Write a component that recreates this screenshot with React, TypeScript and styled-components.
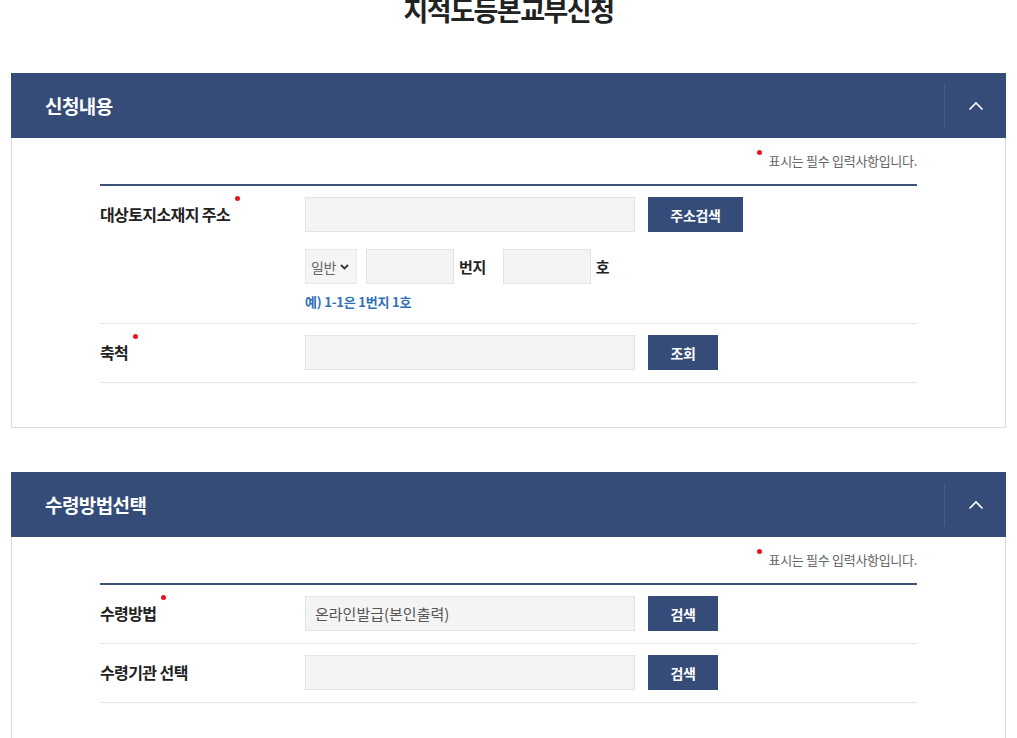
import React from "react";
import styled, { createGlobalStyle } from "styled-components";

const GlobalStyle = createGlobalStyle`
  html, body { margin: 0; padding: 0; background: #fff; }
  body { font-family: "Noto Sans CJK KR", "Noto Sans", sans-serif; color: #222; }
  * { box-sizing: border-box; }
`;

const Page = styled.div`
  padding: 0 11px;
  overflow: hidden;
`;

const Title = styled.h2`
  margin: -5px 0 48px;
  text-align: center;
  font-size: 27px;
  line-height: 30px;
  font-weight: 700;
  letter-spacing: -1.5px;
  color: #222;
`;

const Panel = styled.section`
  border: 1px solid #dcdcdc;
  border-top: 0;
  margin-bottom: 44px;
`;

const PanelHeader = styled.header`
  display: flex;
  align-items: center;
  height: 65px;
  margin: 0 -1px;
  background: #344c77;
`;

const PanelTitle = styled.h3`
  flex: 1;
  margin: 0;
  padding-left: 34px;
  font-size: 19px;
  font-weight: 700;
  letter-spacing: -0.6px;
  color: #fff;
`;

const Toggle = styled.button`
  display: flex;
  align-items: center;
  justify-content: center;
  width: 62px;
  height: 43px;
  padding: 0;
  border: 0;
  border-left: 1px solid #465d85;
  background: transparent;
  cursor: pointer;
`;

const PanelBody = styled.div`
  padding: 14px 88px 44px;
`;

const Note = styled.p`
  display: flex;
  justify-content: flex-end;
  margin: 0 0 14px;
  font-size: 13px;
  line-height: 18px;
  letter-spacing: -0.3px;
  color: #666;
`;

const NoteDot = styled.span`
  width: 5px;
  height: 5px;
  margin: -2px 7px 0 0;
  border-radius: 50%;
  background: #e8141b;
`;

const Form = styled.div`
  border-top: 2px solid #3d5177;
`;

const Row = styled.div`
  display: flex;
  padding: 11px 0 12px;
  border-bottom: 1px solid #e6e6e6;
`;

const Label = styled.div`
  width: 205px;
  flex: none;
  font-size: 16px;
  line-height: 35px;
  font-weight: 700;
  letter-spacing: -0.6px;
  color: #222;
`;

const Required = styled.span`
  position: relative;
  &::after {
    content: "";
    position: absolute;
    right: -10px;
    top: -6px;
    width: 5px;
    height: 5px;
    border-radius: 50%;
    background: #e8141b;
  }
`;

const Field = styled.div`
  display: flex;
  flex-direction: column;
`;

const Line = styled.div<{ $top?: number }>`
  display: flex;
  align-items: center;
  margin-top: ${(p) => p.$top ?? 0}px;
`;

const TextInput = styled.input<{ $w: number }>`
  width: ${(p) => p.$w}px;
  height: 35px;
  padding: 0 9px;
  border: 1px solid #e3e3e3;
  background: #f4f4f4;
  font-family: inherit;
  font-size: 15px;
  letter-spacing: 0;
  color: #555;
  outline: none;
`;

const Select = styled.div`
  display: flex;
  align-items: center;
  gap: 4px;
  width: 52px;
  height: 35px;
  padding: 0 0 0 5px;
  border: 1px solid #e9e9e9;
  background: #f5f5f5;
  font-size: 14px;
  letter-spacing: -0.3px;
  color: #666;
`;

const Button = styled.button<{ $w: number }>`
  width: ${(p) => p.$w}px;
  height: 35px;
  margin-left: 13px;
  border: 0;
  background: #344c77;
  color: #fff;
  font-family: inherit;
  font-size: 14px;
  font-weight: 700;
  letter-spacing: -0.3px;
  cursor: pointer;
`;

const Unit = styled.span<{ $gap: number }>`
  margin: 0 ${(p) => p.$gap}px 0 5px;
  font-size: 15px;
  font-weight: 700;
  letter-spacing: -0.4px;
  color: #222;
`;

const Hint = styled.p`
  margin: 8px 0 0;
  font-size: 13px;
  line-height: 19px;
  font-weight: 700;
  letter-spacing: -0.2px;
  color: #2f6fb7;
`;

const ChevronUp = () => (
  <svg width="16" height="10" viewBox="0 0 16 10" fill="none">
    <polyline points="1.5,8.5 8,2 14.5,8.5" stroke="#fff" strokeWidth="1.6" />
  </svg>
);

const ChevronDown = () => (
  <svg width="9" height="6" viewBox="0 0 9 6" fill="none">
    <polyline points="1,1 4.5,4.5 8,1" stroke="#333" strokeWidth="1.8" />
  </svg>
);

const Section: React.FC<{ title: string; children: React.ReactNode }> = ({ title, children }) => (
  <Panel>
    <PanelHeader>
      <PanelTitle>{title}</PanelTitle>
      <Toggle aria-label="접기">
        <ChevronUp />
      </Toggle>
    </PanelHeader>
    <PanelBody>
      <Note>
        <NoteDot />
        표시는 필수 입력사항입니다.
      </Note>
      <Form>{children}</Form>
    </PanelBody>
  </Panel>
);

export default function App() {
  return (
    <Page>
      <GlobalStyle />
      <Title>지적도등본교부신청</Title>

      <Section title="신청내용">
        <Row>
          <Label>
            <Required>대상토지소재지 주소</Required>
          </Label>
          <Field>
            <Line>
              <TextInput $w={330} />
              <Button $w={95}>주소검색</Button>
            </Line>
            <Line $top={17}>
              <Select>
                일반 <ChevronDown />
              </Select>
              <TextInput $w={88} style={{ marginLeft: 9 }} />
              <Unit $gap={17}>번지</Unit>
              <TextInput $w={88} />
              <Unit $gap={0}>호</Unit>
            </Line>
            <Hint>예) 1-1은 1번지 1호</Hint>
          </Field>
        </Row>
        <Row>
          <Label>
            <Required>축척</Required>
          </Label>
          <Field>
            <Line>
              <TextInput $w={330} />
              <Button $w={70}>조회</Button>
            </Line>
          </Field>
        </Row>
      </Section>

      <Section title="수령방법선택">
        <Row>
          <Label>
            <Required>수령방법</Required>
          </Label>
          <Field>
            <Line>
              <TextInput $w={330} defaultValue="온라인발급(본인출력)" />
              <Button $w={70}>검색</Button>
            </Line>
          </Field>
        </Row>
        <Row>
          <Label>수령기관 선택</Label>
          <Field>
            <Line>
              <TextInput $w={330} />
              <Button $w={70}>검색</Button>
            </Line>
          </Field>
        </Row>
      </Section>
    </Page>
  );
}
